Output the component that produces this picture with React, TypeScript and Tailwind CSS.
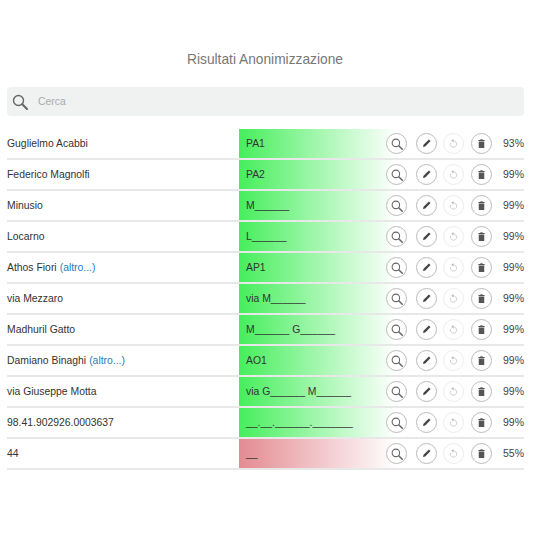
const rows = [
  { name: 'Guglielmo Acabbi', code: 'PA1', pct: '93%' },
  { name: 'Federico Magnolfi', code: 'PA2', pct: '99%' },
  { name: 'Minusio', code: 'M______', pct: '99%' },
  { name: 'Locarno', code: 'L______', pct: '99%' },
  { name: 'Athos Fiori', more: true, code: 'AP1', pct: '99%' },
  { name: 'via Mezzaro', code: 'via M______', pct: '99%' },
  { name: 'Madhuril Gatto', code: 'M______ G______', pct: '99%' },
  { name: 'Damiano Binaghi', more: true, code: 'AO1', pct: '99%' },
  { name: 'via Giuseppe Motta', code: 'via G______ M______', pct: '99%' },
  { name: '98.41.902926.0003637', code: '__.__.______._______', pct: '99%' },
  { name: '44', code: '__', pct: '55%', bad: true },
]

const SearchIcon = ({ className }: { className: string }) => (
  <svg viewBox="0 0 16 16" fill="none" stroke="currentColor" className={className}>
    <circle cx="6.5" cy="6.5" r="5" strokeWidth="1.4" />
    <path d="M10.3 10.3L15 15" strokeWidth="2" strokeLinecap="round" />
  </svg>
)

const RoundButton = ({ children, faded }: { children: React.ReactNode; faded?: boolean }) => (
  <div
    className={`flex h-[21px] w-[21px] items-center justify-center rounded-full border bg-white ${
      faded ? 'border-[#ececec] text-[#b5b5b5]' : 'border-[#bbbbbb] text-[#555]'
    }`}
  >
    {children}
  </div>
)

const Row = ({ data }: { data: (typeof rows)[number] }) => {
  return (
    <div className="flex h-[31px] items-stretch border-b-2 border-[#e8e8e8] text-[10.4px] text-[#333]">
      <div className="flex w-[232px] items-center">
        {data.name}
        {data.more && <span className="ml-[3px] text-[#2a7ab8]">(altro...)</span>}
      </div>
      <div
        className={`flex w-[157px] items-center pl-[7px] ${
          data.bad
            ? 'bg-[linear-gradient(to_right,#e38b92,#ffffff)]'
            : 'bg-[linear-gradient(to_right,#46ee5c,#ffffff)]'
        }`}
      >
        {data.code}
      </div>
      <div className="-ml-[10px] flex items-center">
        <RoundButton>
          <SearchIcon className="h-[12px] w-[12px] text-[#666]" />
        </RoundButton>
        <div className="ml-[9px]">
          <RoundButton>
            <svg viewBox="0 0 12 12" className="h-[11px] w-[11px] text-[#444]" fill="currentColor">
              <path d="M8.6 1.6l1.8 1.8-5.8 5.8-2.4.7.6-2.5z" />
            </svg>
          </RoundButton>
        </div>
        <div className="ml-[6px]">
          <RoundButton faded>
            <svg viewBox="0 0 12 12" className="h-[11px] w-[11px]" fill="none" stroke="currentColor">
              <path d="M6 3.2a3.4 3.4 0 1 1-3.2 2.3" strokeWidth="0.7" />
              <path d="M6 1l0 4-2.4-2z" fill="currentColor" stroke="none" />
            </svg>
          </RoundButton>
        </div>
        <div className="ml-[7px]">
          <RoundButton>
            <svg viewBox="0 0 12 12" className="h-[11px] w-[11px]" fill="currentColor">
              <path d="M2.6 2.2h6.8v1H2.6zM3 3.7h6V11H3zM4.8 1h2.4v1H4.8z" />
            </svg>
          </RoundButton>
        </div>
        <span className="ml-[11px] w-[21px] text-right text-[10.5px] text-[#444]">{data.pct}</span>
      </div>
    </div>
  )
}

export default function App() {
  return (
    <div className="h-[540px] w-[540px] bg-white pl-[7px] pr-[16px] pt-[51px] font-['Liberation_Sans',Arial,sans-serif]">
      <h1 className="pr-[1px] text-center text-[13.75px] font-normal leading-[17px] text-[#777]">
        Risultati Anonimizzazione
      </h1>
      <div className="mt-[19px] flex h-[29px] items-center rounded-[4px] bg-[#f0f1f1] pl-[5px]">
        <SearchIcon className="h-[16px] w-[16px] text-[#666]" />
        <span className="ml-[10px] text-[10.4px] text-[#aaa]">Cerca</span>
      </div>
      <div className="mt-[13px]">
        {rows.map((row, index) => (
          <Row key={index} data={row} />
        ))}
      </div>
    </div>
  )
}
